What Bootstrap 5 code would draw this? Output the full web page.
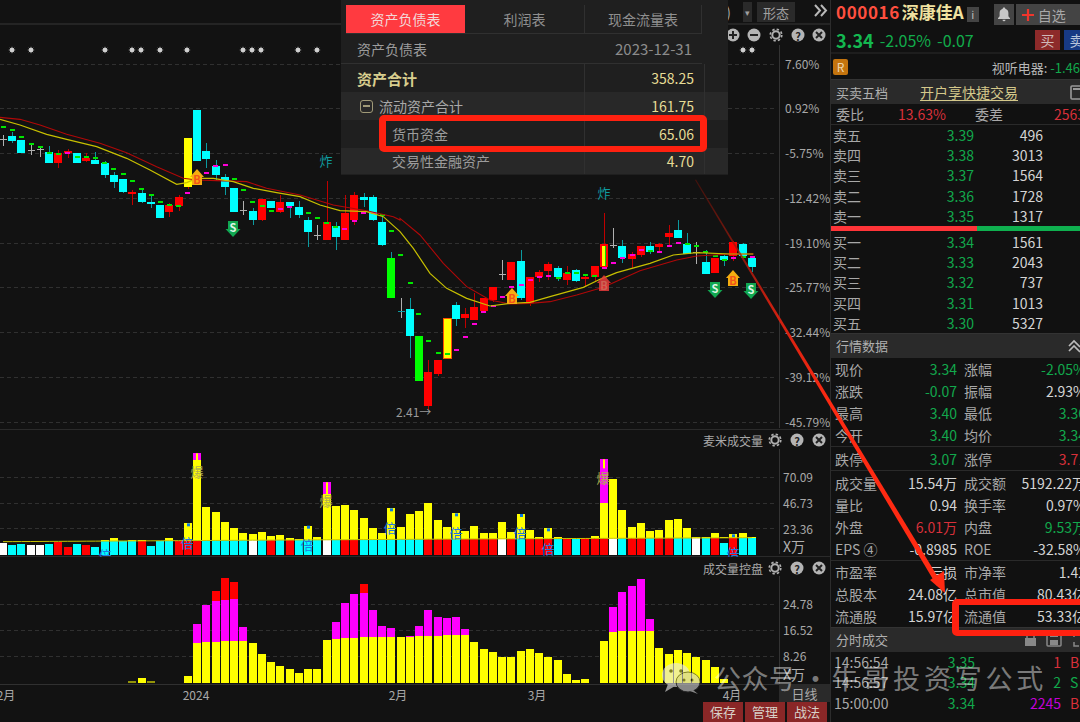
<!DOCTYPE html>
<html lang="zh-CN">
<head>
<meta charset="utf-8">
<title>行情</title>
<link href="https://cdn.jsdelivr.net/npm/bootstrap@5.3.0/dist/css/bootstrap.min.css" rel="stylesheet">
<style>
html,body{margin:0;height:722px;overflow:hidden;background:#121212;}
body{font-family:"Noto Sans CJK SC","Liberation Sans",sans-serif;font-size:14px;line-height:1;color:#a8a8a8;}
.stage{width:1080px;height:722px;overflow:hidden;}
.chart-col{width:830px;flex:none;}
.side-col{width:250px;flex:none;border-left:1px solid #2c2c2c;background:#111;overflow:hidden;}
svg text{font-family:"Noto Sans CJK SC","Liberation Sans",sans-serif;}
svg{display:block;}
.tool-bar{height:25px;border-bottom:2px solid #242424;padding-right:2px;}
.tool-cap{height:20px;background:#2a2a2a;color:#a0a0a0;font-size:13px;padding:0 6px;margin-top:2px;margin-left:5px;}
.tool-txt{color:#a0a0a0;font-size:15px;}
.foot-row{height:18px;}
.day-box{width:51px;height:18px;background:#2a2a2a;color:#aaa;font-size:13px;}
.act-row{height:20px;gap:2px;padding-right:3px;}
.act-btn{width:40px;height:20px;padding:0;border:0;border-radius:0;background:#8a2727;color:#d8d0c8;font-size:13px;line-height:20px;}
.pop{left:341px;top:0;width:387px;height:175px;background:#1f1f1f;padding:5px 0 0 5px;color:#9c9c9c;}
.pop-tabs{height:29px;width:356px;border-bottom:1px solid #303030;}
.pop-tab{width:120px;height:28px;font-size:14px;border-right:1px solid #303030;color:#8f8f8f;}
.pop-tab.on{width:119px;background:#ff3a40;color:#f2d8d8;border-right:0;}
.pop-row{height:28px;margin-left:-5px;padding-left:5px;}
.pop-row.alt{background:#282828;}
.pop-row.head{height:30px;border-bottom:1px solid #303030;}
.pop-name{width:239px;height:100%;padding-left:11px;border-right:1px solid #303030;flex:none;}
.pop-val{width:120px;height:100%;padding-right:10px;border-right:1px solid #303030;color:#e6dc96;font-size:14px;flex:none;}
.pop-name.sum{color:#d8ce8e;font-weight:700;font-size:15px;}
.pop-name.sub{padding-left:46px;}
.pop-name.grp{padding-left:33px;position:relative;color:#a8a8a8;}
.gb{width:13px;height:13px;border:1.5px solid #a09a78;border-radius:3px;margin-left:-19px;margin-right:6px;position:relative;flex:none;}
.gb::after{content:"";position:absolute;left:2px;right:2px;top:4px;height:2px;background:#a09a78;}
.hi-box{border:solid #ff2110;border-width:6px 7px;border-radius:5px;}
.hi-a{left:379px;top:115px;width:328px;height:37px;}
.hi-b{left:952px;top:599px;width:135px;height:37px;}
.s-top1{height:28px;padding:3px 0 0 5px;width:300px;}
.s-top1>*{flex:none;white-space:nowrap;}
.s-code{color:#ff4f3f;font-weight:700;font-size:17px;letter-spacing:.6px;}
.s-name{color:#f0e2a0;font-weight:700;font-size:17px;margin-left:2px;}
.s-i{width:12px;height:15px;background:#444;color:#bbb;font-size:11px;margin-left:3px;}
.s-bell{width:20px;height:21px;background:#444;margin-left:15px;margin-top:1px;}
.s-fav{width:80px;height:21px;background:#444;color:#a8a8a8;margin-left:2px;margin-top:1px;padding-left:6px;font-size:14px;}
.s-plus{margin-right:4px;}
.s-top2{height:26px;padding-left:5px;border-bottom:2px solid #1e1e1e;color:#12ab4b;width:258px;}
.s-px{font-size:18px;font-weight:700;color:#14b850;margin-right:6px;}
.s-chg{font-size:16px;margin-right:6px;}
.s-buy,.s-sell{width:25px;height:20px;font-size:14px;margin-left:4px;padding:0;border:0;border-radius:0;color:#d0b8b8;line-height:20px;flex:none;}
.s-buy{background:#8d2a2a;margin-left:auto;}
.s-sell{background:#173a85;color:#b8c4da;}
.s-sec{height:24px;padding:0 0 0 2px;font-size:13px;color:#b8b8b8;}
.s-r{width:15px;height:16px;border-radius:2px;background:#c4740e;color:#eed8b0;font-size:12px;}
.s-bar{height:25px;background:#2a2a2a;border-top:1px solid #333;padding:0 0 0 5px;color:#b0b0b0;font-size:13px;}
.s-link{color:#d4c88a;text-decoration:underline;text-underline-offset:2px;margin-left:32px;font-size:14px;}
.wb-row{height:21px;padding:0 0 0 5px;border-bottom:1px solid #2a2a2a;font-size:14px;}
.wb-row>span{flex:none;white-space:nowrap;}
.cell-red{color:#d8303a;}
.cell-green{color:#12a84c;}
.cell-w{color:#d4d4d4;}
.cell-pu{color:#c400d8;}
.book-row{height:20.2px;padding-left:2px;font-size:14px;}
.book-name{width:40px;flex:none;}
.book-px{width:101px;text-align:right;color:#12a84c;flex:none;}
.book-vol{width:69px;text-align:right;color:#d4d4d4;flex:none;}
.split{height:5px;}
.split i{display:block;height:5px;}
.q-set{border-bottom:1px solid #2a2a2a;}
.q-row{display:grid;grid-template-columns:122px 122px;column-gap:7px;padding-left:4px;height:22px;width:260px;align-items:center;font-size:14px;}
.q-cell{display:flex;justify-content:space-between;white-space:nowrap;}
.tr-row{height:20.4px;padding-left:3px;font-size:14px;}
.tr-t{width:54px;flex:none;}
.tr-p{width:87px;text-align:right;color:#12a84c;flex:none;}
.tr-v{width:86px;text-align:right;flex:none;}
.tr-s{margin-left:9px;flex:none;}
.mark-layer{left:0;top:0;pointer-events:none;}
.wm{left:714px;top:660px;color:rgba(255,255,255,.46);font-size:27px;line-height:36px;white-space:nowrap;}
.wm-a{letter-spacing:.5px;}
.wm-d{width:26px;text-align:center;margin-left:5.500px;margin-right:3.500px;}
.wm-b{letter-spacing:3.800px;}
</style>
</head>
<body>
<div class="stage d-flex position-relative">
  <div class="chart-col d-flex flex-column">
    <div class="tool-bar d-flex justify-content-end align-items-start">
      <span class="tool-txt me-2 mt-1">)</span>
      <span class="tool-cap d-flex align-items-center" style="padding:0 2px;font-size:9px;margin-left:4px">▾</span>
      <span class="tool-cap d-flex align-items-center">形态</span>
      <svg class="mt-1" style="margin-left:19px" width="14" height="13" viewBox="0 0 14 13"><path d="M1 1l5 5.500-5 5.500M7 1l5 5.500-5 5.500" fill="none" stroke="#b8b8b8" stroke-width="2"/></svg>
    </div>
    <svg id="p1" width="830" height="404" viewBox="0 25 830 404"></svg>
    <svg id="p2" width="830" height="128" viewBox="0 429 830 128"></svg>
    <svg id="p3" width="830" height="127" viewBox="0 557 830 127"></svg>
    <div class="d-flex foot-row">
      <svg id="p4" width="779" height="18" viewBox="0 684 779 18"></svg>
      <div class="day-box d-flex align-items-center justify-content-center">日线</div>
    </div>
    <div class="act-row d-flex justify-content-end">
      <button class="btn act-btn">保存</button>
      <button class="btn act-btn">管理</button>
      <button class="btn act-btn">战法</button>
    </div>
  </div>

  <div class="side-col">
    <div class="s-top1 d-flex align-items-start">
      <span class="s-code">000016</span><span class="s-name">深康佳A</span>
      <span class="s-i d-flex align-items-center justify-content-center mt-1">i</span>
      <span class="s-bell d-flex align-items-center justify-content-center">
        <svg width="14" height="15" viewBox="0 0 14 15"><path d="M7 0.5c-.8 0-1.300.5-1.300 1.200C3.600 2.300 2.600 4 2.600 6v3.200L1 11.300v.7h12v-.7l-1.600-2.100V6c0-2-1-3.700-3.100-4.300C8.300 1 7.800.5 7 .5zM5.500 12.800a1.500 1.500 0 0 0 3 0z" fill="#c8c8c8"/></svg>
      </span>
      <span class="s-fav d-flex align-items-center"><svg class="s-plus" width="12" height="12" viewBox="0 0 12 12"><path d="M6 0v12M0 6h12" stroke="#f0352c" stroke-width="2.200"/></svg>自选</span>
    </div>
    <div class="s-top2 d-flex align-items-center">
      <span class="s-px">3.34</span><span class="s-chg">-2.05%</span><span class="s-chg">-0.07</span>
      <button class="btn s-buy">买</button><button class="btn s-sell">卖</button>
    </div>
    <div class="s-sec d-flex align-items-center justify-content-between" style="margin-top:1px">
      <span class="s-r d-flex align-items-center justify-content-center">R</span>
      <span class="text-nowrap" style="margin-right:-12px">视听电器: <span class="cell-green">-1.46%</span></span>
    </div>
    <div class="s-bar d-flex align-items-center justify-content-between">
      <span>买卖五档<span class="s-link">开户享快捷交易</span></span>
      <svg width="10" height="15" viewBox="0 0 10 15"><rect x="1" y="1" width="12" height="13" fill="none" stroke="#999" stroke-width="1.600" rx="1"/><rect x="3" y="3" width="7" height="2" fill="#999"/></svg>
    </div>
    <div class="wb-row d-flex align-items-center">
      <span style="width:62px">委比</span><span class="cell-red" style="width:77px">13.63%</span><span style="width:79px">委差</span><span class="cell-red">2563</span>
    </div>
    <div id="sell"></div>
    <div class="split d-flex"><i style="width:147px;background:#ff3438"></i><i style="width:103px;background:#0fb04f"></i></div>
    <div id="buy" style="margin-top:1px"></div>
    <div class="s-bar d-flex align-items-center justify-content-between">
      <span>行情数据</span>
      <svg width="12" height="14" viewBox="0 0 12 14"><path d="M1 7l5-5 6 6M1 12l5-5 6 6" fill="none" stroke="#bbb" stroke-width="1.700"/></svg>
    </div>
    <div class="q-set" id="q1"></div>
    <div class="q-set" id="q2" style="padding-top:1px"></div>
    <div class="q-set" id="q3" style="padding-top:1px"></div>
    <div id="q4"></div>
    <div class="s-bar d-flex align-items-center justify-content-between" style="padding-right:0">
      <span>分时成交</span>
      <svg width="56" height="15" viewBox="0 0 56 15"><path d="M3 6V4a3.500 3.500 0 0 1 7 0v2" fill="none" stroke="#888" stroke-width="1.500"/><rect x="1" y="6" width="11" height="8" fill="#888"/><rect x="23" y="1" width="14" height="13" fill="none" stroke="#888" stroke-width="1.500" rx="1"/><rect x="26" y="8" width="8" height="5" fill="#888"/><rect x="26" y="2" width="8" height="3" fill="#888"/><path d="M55 1h-5v4M50 10v4h5" fill="none" stroke="#888" stroke-width="1.500"/></svg>
    </div>
    <div id="trades"></div>
  </div>

  <div class="pop position-absolute">
    <div class="pop-tabs d-flex">
      <div class="pop-tab on d-flex align-items-center justify-content-center">资产负债表</div>
      <div class="pop-tab d-flex align-items-center justify-content-center">利润表</div>
      <div class="pop-tab d-flex align-items-center justify-content-center" style="width:117px">现金流量表</div>
    </div>
    <div class="pop-row head d-flex" style="width:361px">
      <div class="d-flex align-items-center justify-content-between w-100" style="padding:0 10px 0 11px"><span>资产负债表</span><span style="font-size:15px;color:#8c8c8c">2023-12-31</span></div>
    </div>
    <div class="pop-row d-flex">
      <div class="pop-name sum d-flex align-items-center">资产合计</div>
      <div class="pop-val d-flex align-items-center justify-content-end">358.25</div>
    </div>
    <div class="pop-row alt d-flex">
      <div class="pop-name grp d-flex align-items-center"><span class="gb"></span>流动资产合计</div>
      <div class="pop-val d-flex align-items-center justify-content-end">161.75</div>
    </div>
    <div class="pop-row d-flex">
      <div class="pop-name sub d-flex align-items-center">货币资金</div>
      <div class="pop-val d-flex align-items-center justify-content-end">65.06</div>
    </div>
    <div class="pop-row alt d-flex" style="height:26px">
      <div class="pop-name sub d-flex align-items-center">交易性金融资产</div>
      <div class="pop-val d-flex align-items-center justify-content-end">4.70</div>
    </div>
  </div>

  <svg class="mark-layer position-absolute" width="1080" height="722" viewBox="0 0 1080 722">
    <defs><linearGradient id="ag" gradientUnits="userSpaceOnUse" x1="695" y1="180" x2="945" y2="593">
      <stop offset="0" stop-color="#6a1208" stop-opacity=".55"/><stop offset=".3" stop-color="#c81f10"/><stop offset=".55" stop-color="#ff2a12"/><stop offset="1" stop-color="#ff2a12"/>
    </linearGradient></defs>
    <polygon points="695,180 696,179.500 941.500,583 937,586" fill="url(#ag)"/>
    <polygon points="945,593 930,580 944,571" fill="#ff2a12"/>
    <g opacity=".62">
      <ellipse cx="676" cy="675" rx="14" ry="12" fill="#e8e8e8"/><polygon points="668,684 665,692 675,686" fill="#e8e8e8"/>
      <circle cx="671" cy="671" r="1.800" fill="#333"/><circle cx="681" cy="671" r="1.800" fill="#333"/>
      <ellipse cx="688" cy="682" rx="12" ry="10" fill="#cfcfcf" stroke="#333" stroke-width="1"/><polygon points="693,690 698,694 690,691" fill="#cfcfcf"/>
      <circle cx="684" cy="680" r="1.500" fill="#333"/><circle cx="692" cy="680" r="1.500" fill="#333"/>
    </g>
  </svg>
  <div class="hi-box hi-a position-absolute"></div>
  <div class="hi-box hi-b position-absolute"></div>
  <div class="wm position-absolute d-flex"><span class="wm-a">公众号</span><span class="wm-d">·</span><span class="wm-b">牛哥投资写公式</span></div>
</div>

<script src="https://cdn.jsdelivr.net/npm/bootstrap@5.3.0/dist/js/bootstrap.bundle.min.js"></script>
<script>
var C={c:'#00ffff',r:'#ff0000',g:'#00ff00',y:'#ffff00',Y:'#ffff00',R:'#ff0000',d:'#bbbbbb',w:'#ffffff',m:'#ff00ff'};
var WK={c:'#0b9aa0',r:'#c00000',g:'#0b9aa0',y:'#c00000',Y:'#c00000',R:'#c00000',d:'#b0b0b0'};
function X(n){return 3+n*9.245;}
function el(id,html){document.getElementById(id).innerHTML=html;}
function dash(ys,x2){return ys.map(function(y){return '<line x1="0" x2="'+x2+'" y1="'+(y+.5)+'" y2="'+(y+.5)+'" stroke="#303030" stroke-dasharray="4 3"/>';}).join('');}
function label(x,y,t,fill,size,anchor,extra){return '<text x="'+x+'" y="'+y+'" fill="'+(fill||'#aaa')+'" font-size="'+(size||12)+'" dominant-baseline="central"'+(anchor?' text-anchor="'+anchor+'"':'')+(extra||'')+'>'+t+'</text>';}
function ctrl(x,y,k){
  var s='<circle cx="'+x+'" cy="'+y+'" r="6.500" fill="#b4b4b4"/>';
  if(k=='+')s+='<path d="M'+(x-4)+' '+y+'h8M'+x+' '+(y-4)+'v8" stroke="#222" stroke-width="2"/>';
  if(k=='-')s+='<path d="M'+(x-4)+' '+y+'h8" stroke="#222" stroke-width="2"/>';
  if(k=='x')s+='<path d="M'+(x-3)+' '+(y-3)+'l6 6M'+(x+3)+' '+(y-3)+'l-6 6" stroke="#222" stroke-width="2"/>';
  if(k=='?')s+='<text x="'+x+'" y="'+(y+.5)+'" fill="#222" font-size="11" font-weight="700" text-anchor="middle" dominant-baseline="central">?</text>';
  if(k=='g')s='<circle cx="'+x+'" cy="'+y+'" r="5.800" fill="none" stroke="#b0b0b0" stroke-width="1.600" stroke-dasharray="2.400 2.150"/><circle cx="'+x+'" cy="'+y+'" r="3.700" fill="none" stroke="#b0b0b0" stroke-width="2"/>';
  return s;
}
function star(x,y){return '<g stroke="#c8c8c8" stroke-width=".8"><path d="M'+(x-3.200)+' '+y+'h6.400M'+x+' '+(y-3.200)+'v6.400M'+(x-2.200)+' '+(y-2.200)+'l4.400 4.400M'+(x+2.200)+' '+(y-2.200)+'l-4.400 4.400"/></g><circle cx="'+x+'" cy="'+y+'" r="2.200" fill="#d0d0d0"/>';}
function headIcons(y){return ctrl(775,y,'g')+ctrl(797,y,'?')+ctrl(819,y,'x');}

var K=[[0,139,141,135,146,'d'],[1,136,141,132,143,'c'],[2,140,153,140,153,'c'],[3,150,151,144,155,'d'],[4,149,150,146,157,'d'],[5,152,163,146,163,'c'],[6,153,163,150,168,'r'],[7,151,153,149,158,'r'],[8,153,163,153,163,'c'],[9,158,161,153,162,'r'],[10,160,164,152,164,'c'],[11,163,175,161,178,'c'],[12,175,182,172,188,'c'],[13,179,192,179,193,'c'],[14,192,194,190,205,'r'],[15,193,202,190,203,'c'],[16,202,204,195,208,'c'],[17,205,218,205,218,'c'],[18,205,212,203,217,'r'],[19,197,206,195,211,'r'],[20,138,187,138,189,'Y'],[21,110,161,110,161,'c'],[22,151,159,143,168,'c'],[23,166,175,160,180,'c'],[24,177,187,174,195,'c'],[25,188,212,188,212,'c'],[26,210,211,201,215,'d'],[27,211,220,208,225,'c'],[28,199,220,199,221,'r'],[29,201,208,201,208,'c'],[30,202,212,195,213,'r'],[31,202,206,202,218,'c'],[32,207,215,201,218,'c'],[33,220,232,217,247,'c'],[34,235,236,225,240,'d'],[35,222,240,181,240,'r'],[36,226,237,222,250,'c'],[37,213,240,195,240,'r'],[38,195,220,192,225,'r'],[39,197,200,193,207,'c'],[40,197,220,195,221,'c'],[41,222,245,216,246,'c'],[42,258,298,252,298,'g'],[43,311,312,298,318,'d'],[44,309,336,298,358,'c'],[45,336,381,336,381,'g'],[46,372,406,360,410,'r'],[47,360,374,360,376,'r'],[48,318,358,318,358,'y'],[49,305,319,302,326,'c'],[50,314,318,308,328,'r'],[51,307,320,293,320,'r'],[52,298,311,298,312,'r'],[53,287,300,287,302,'r'],[54,274,275,260,280,'d'],[55,262,280,262,280,'r'],[56,261,298,250,300,'c'],[57,277,303,277,306,'r'],[58,272,277,270,282,'r'],[59,264,271,262,280,'r'],[60,268,277,266,281,'c'],[61,273,280,266,285,'r'],[62,270,281,269,282,'c'],[63,277,279,275,287,'r'],[64,266,277,266,281,'r'],[65,244,267,213,268,'R'],[66,245,246,228,248,'d'],[67,246,258,240,263,'c'],[68,254,259,252,268,'r'],[69,246,255,246,257,'r'],[70,246,252,242,254,'c'],[71,244,247,243,251,'r'],[72,233,237,225,246,'r'],[73,230,238,220,238,'c'],[74,244,254,233,254,'c'],[75,252,253,242,264,'d'],[76,262,274,250,274,'c'],[77,258,273,258,273,'r'],[78,256,260,255,266,'c'],[79,242,256,241,261,'r'],[80,244,256,243,258,'c'],[81,258,267,258,272,'c']];
var TG=[[3,126],[12,129],[21,136],[31,143],[40,146],[49,152],[58,153],[77,156],[86,156],[95,157],[104,162],[113,168],[123,173],[132,180],[141,188],[151,194],[160,201],[169,204],[178,205],[234,178],[243,189],[252,201],[262,205],[271,210],[308,212],[317,217],[326,222],[335,226],[382,214],[391,230],[400,254],[410,282],[418,313],[428,340],[438,352],[447,353],[558,277],[567,272],[576,272],[585,274],[594,275],[650,250],[687,243],[696,245],[705,251],[715,255],[724,259],[743,256]];
var TM=[[67,152],[187,192],[206,172],[215,165],[225,164],[280,208],[289,206],[344,228],[354,220],[363,212],[373,212],[456,349],[465,336],[474,323],[483,311],[493,305],[502,296],[511,286],[521,284],[530,279],[539,276],[548,275],[604,267],[613,262],[622,257],[632,254],[641,249],[659,251],[669,245],[678,242],[733,257],[752,256]];

function pts1(a){return a.map(function(p){return (p[0]/3)+','+(p[1]/3);}).join(' ');}
function pts7(a){return a.map(function(p){return (p[0]/3+400)+','+(p[1]/3+180);}).join(' ');}
var red1=[[0,352],[60,358],[120,375],[200,403],[300,430],[380,458],[470,500],[550,535],[590,540],[650,542],[740,545],[800,565],[900,585],[1000,615],[1100,632],[1180,650],[1200,660]];
var red7=[[0,115],[60,165],[130,250],[200,320],[270,360],[330,372],[390,370],[450,365],[530,345],[610,322],[720,272],[830,240],[890,228],[990,222],[1060,222]];
var yel1=[[0,358],[60,375],[140,403],[200,418],[290,440],[380,475],[450,510],[530,553],[560,548],[590,535],[640,535],[700,545],[760,565],[830,578],[900,590],[960,615],[1020,632],[1100,635],[1150,650]];
var yel7=[[0,155],[40,205],[90,280],[140,325],[200,355],[270,378],[330,370],[390,367],[450,350],[550,322],[600,298],[650,278],[750,250],[820,225],[890,218],[990,222],[1060,222]];

function house(x,y,f,t){f=f||'#f5ad10';t=t||'#f4541a';return '<polygon points="'+x+','+(y-9)+' '+(x+7)+','+(y-1)+' '+(x+5)+','+(y-1)+' '+(x+5)+','+(y+7)+' '+(x-5)+','+(y+7)+' '+(x-5)+','+(y-1)+' '+(x-7)+','+(y-1)+'" fill="'+f+'"/><text x="'+x+'" y="'+(y+1)+'" fill="'+t+'" font-size="11" font-weight="700" text-anchor="middle" dominant-baseline="central">B</text>';}
function down(x,y){return '<polygon points="'+x+','+(y+9)+' '+(x+7.500)+','+(y+1)+' '+(x+5)+','+(y+1)+' '+(x+5)+','+(y-7)+' '+(x-5)+','+(y-7)+' '+(x-5)+','+(y+1)+' '+(x-7.500)+','+(y+1)+'" fill="#11a750"/><text x="'+x+'" y="'+(y-1)+'" fill="#dff5e6" font-size="11" font-weight="700" text-anchor="middle" dominant-baseline="central">S</text>';}

(function(){
  var s='';
  s+='<line x1="779.500" x2="779.500" y1="45" y2="428" stroke="#333"/>';
  s+=dash([64,108,153,198,243,287,332,377,422],775);
  var ax=[[64,'7.60%'],[108,'0.92%'],[153,'-5.75%'],[198,'-12.42%'],[243,'-19.10%'],[287,'-25.77%'],[332,'-32.44%'],[377,'-39.12%'],[422,'-45.79%']];
  ax.forEach(function(a){s+=label(785,a[0]-1,a[1],'#a8a8a8',12);});
  [12,31,105,132,141,160,187,243,252,261,298,317,743,752].forEach(function(x){s+=star(x,50);});
  K.forEach(function(k){
    var x=Math.round(X(k[0])),col=C[k[5]],w=WK[k[5]];
    s+='<rect x="'+x+'" y="'+k[3]+'" width="1" height="'+(k[4]-k[3])+'" fill="'+w+'" shape-rendering="crispEdges"/>';
    if(k[5]=='d'){s+='<rect x="'+(x-3)+'" y="'+k[1]+'" width="7" height="1" fill="'+(k[0]==43?'#0b9aa0':w)+'" shape-rendering="crispEdges"/>';return;}
    s+='<rect x="'+(x-4)+'" y="'+k[1]+'" width="8" height="'+(k[2]-k[1])+'" fill="'+col+'" shape-rendering="crispEdges"'+(k[5]=='y'?' stroke="#ff5000" stroke-width="1"':'')+'/>';
  });
  s+='<rect x="602" y="246" width="3" height="20" fill="#ffff00" shape-rendering="crispEdges"/><rect x="605" y="246" width="1" height="20" fill="#00e000" shape-rendering="crispEdges"/>';
  TG.forEach(function(t){s+='<rect x="'+(t[0]-2.500)+'" y="'+t[1]+'" width="5" height="2" fill="#00e600" shape-rendering="crispEdges"/>';});
  TM.forEach(function(t){s+='<rect x="'+(t[0]-2.500)+'" y="'+t[1]+'" width="5" height="2" fill="#ff00d8" shape-rendering="crispEdges"/>';});
  s+='<polyline points="'+pts1(red1)+' '+pts7(red7)+'" fill="none" stroke="#b00808" stroke-width="1.100"/>';
  s+='<polyline points="'+pts1(yel1)+' '+pts7(yel7)+'" fill="none" stroke="#c8c000" stroke-width="1.200"/>';
  s+=house(197,178)+house(512,297)+house(733,279);
  s+='<g opacity=".85">'+house(604,284,'#e83a3a','#f07060')+'</g>';
  s+=down(233,228)+down(715,289)+down(751,290);
  s+=label(326,160,'炸','#0f9ca0',13,'middle')+label(604,192,'炸','#0f9ca0',13,'middle');
  s+=label(396,411,'2.41→','#9a9a9a',12);
  s+=ctrl(733,35,'+')+ctrl(754,35,'-')+ctrl(776,35,'g')+ctrl(798,35,'?')+ctrl(819,35,'x');
  el('p1',s);

  var low='wccwwcrrcrcccccrcccrrrcccccwcrcrcccwcrrcccccc'.split('').concat('crrrcrrrrwrcrrrcrcrrrwcrrcrrccwcrcrcc'.split(''));
  var vt={11:345,12:338,13:347,14:344,15:346,18:338,20:295,21:85,22:246,23:262,24:292,25:310,26:323,27:326,28:322,29:334,30:331,31:339,32:343,33:302,34:336,35:172,36:243,37:240,38:254,39:278,40:310,41:323,42:250,43:306,44:267,45:257,46:235,47:286,48:307,49:265,50:318,51:302,52:323,53:323,54:292,55:320,56:267,57:315,58:336,59:310,60:336,64:333,65:103,66:162,67:255,68:307,69:294,70:318,71:315,72:286,73:283,74:310,75:335,76:335,77:325,78:335,79:328,80:325,81:335};
  var lowT={0:355,1:360,2:357,3:360,4:360,5:357,6:352,7:365,8:357,9:360,10:365,16:362};
  var v='';
  v+='<rect x="0" y="429" width="830" height="1" fill="#2a2a2a"/><rect x="0" y="556" width="830" height="1.500" fill="#2a2a2a"/>';
  v+='<line x1="779.500" x2="779.500" y1="449" y2="554" stroke="#333"/>';
  v+=dash([477,503,528],775);
  [[477,'70.09'],[503,'46.73'],[529,'23.36']].forEach(function(a){v+=label(783,a[0]-1,a[1],'#a8a8a8',12);});
  v+=label(783,546,'X万','#b0b0b0',14);
  v+=label(763,440,'麦米成交量','#a8a8a8',12,'end')+headIcons(440);
  function y2(z){return 425+z/3;}
  var base=function(n){return n<50?350-(n/50)*8:342-(n-50)/32*4;};
  for(var n=0;n<=81;n++){
    var x=Math.round(X(n))-4,c=C[low[n]||'c'];
    if(vt[n]){
      var top=y2(vt[n]);
      if(n==21||n==35||n==65){
        var m=n==21?105:(n==35?208:233);
        v+='<rect x="'+x+'" y="'+top+'" width="8" height="'+(y2(m)-top)+'" fill="#ff00ff" shape-rendering="crispEdges"/>';
        if(n!=65){v+='<rect x="'+(x+3)+'" y="'+top+'" width="2" height="'+(y2(m)-top)+'" fill="#ffff00"/>';}
        else{v+='<rect x="'+(x+3)+'" y="'+top+'" width="2" height="9" fill="#ffff00"/>';}
        top=y2(m);
      }
      v+='<rect x="'+x+'" y="'+top+'" width="8" height="'+(y2(base(n))-top)+'" fill="#ffff00" shape-rendering="crispEdges"/>';
    }
    var lt=lowT[n]||(n==78?355:(n==61||n==62?342:base(n)));
    v+='<rect x="'+x+'" y="'+y2(lt)+'" width="8" height="'+(y2(389)-y2(lt))+'" fill="'+c+'" shape-rendering="crispEdges"/>';
    if([20,33,42,49,56,59,79].indexOf(n)>=0){v+='<rect x="'+(x+3)+'" y="'+y2(vt[n])+'" width="3" height="3" fill="#0b7be0"/>';}
  }
  var lp=[];for(var i=0;i<=81;i++){lp.push(X(i)+','+y2(base(i)));}
  v+='<polyline points="'+lp.join(' ')+'" fill="none" stroke="#c8c400" stroke-width="1"/>';
  [[187,542],[307,544],[390,527],[105,554],[456,532],[520,532],[548,548],[733,552]].forEach(function(p){v+=label(p[0],p[1],'倍','#1f78e0',13,'middle');});
  [[197,471],[326,500],[603,477]].forEach(function(p){v+=label(p[0],p[1],'爆','#b0b050',13,'middle');});
  el('p2',v);

  var ct={14:[364],15:[354],16:[364],20:[349],21:[248,192],22:[245,134],23:[245,123,92],24:[243,121,55],25:[243,118,66],26:[243,201],27:[248],28:[283],29:[307],30:[317],31:[328],32:[339],33:[328],34:[328],35:[240],36:[238,187],37:[234,129],38:[234,103],39:[232,100,73],40:[232,150],41:[232,198],42:[230,203],43:[232],44:[230,228],45:[227,198],46:[227,150],47:[227,171],48:[224,174],49:[224,171],50:[224,208],51:[245],52:[267],53:[277],54:[292],55:[292],56:[274],57:[268],58:[280],59:[290],60:[300],61:[343],62:[359],63:[356],65:[243],66:[216,142],67:[214,95],68:[214,79],69:[214,56],70:[212,177],71:[264],72:[282],73:[271],74:[280],75:[290],76:[300],77:[322],78:[358]};
  function y3(z){return 560+z/3;}
  var w='';
  w+='<line x1="779.500" x2="779.500" y1="576" y2="684" stroke="#333"/>';
  w+=dash([604,630,656],775);
  [[604,'24.78'],[630,'16.52'],[656,'8.26']].forEach(function(a){w+=label(783,a[0]-1,a[1],'#a8a8a8',12);});
  w+=label(783,674,'X万','#b0b0b0',14);
  w+=label(763,568,'成交量控盘','#a8a8a8',12,'end')+headIcons(568);
  Object.keys(ct).forEach(function(k){
    var a=ct[k],x=Math.round(X(+k))-4,dim=(k==14||k==16)?' opacity=".55"':'';
    w+='<rect x="'+x+'" y="'+y3(a[0])+'" width="8" height="'+(y3(368)-y3(a[0]))+'" fill="#ffff00" shape-rendering="crispEdges"'+dim+'/>';
    if(a[1])w+='<rect x="'+x+'" y="'+y3(a[1])+'" width="8" height="'+(y3(a[0])-y3(a[1]))+'" fill="#ff00ff" shape-rendering="crispEdges"/>';
    if(a[2])w+='<rect x="'+x+'" y="'+y3(a[2])+'" width="8" height="'+(y3(a[1])-y3(a[2]))+'" fill="#ff0000" shape-rendering="crispEdges"/>';
  });
  el('p3',w);
  var d='<rect x="0" y="684" width="779" height="1" fill="#303030"/>';
  [[6,'2月'],[196,'2024'],[398,'2月'],[537,'3月'],[732,'4月']].forEach(function(a){d+=label(a[0],694,a[1],'#a8a8a8',12,'middle');});
  el('p4',d);

  function book(names,px,vol){return names.map(function(t,i){return '<div class="book-row d-flex align-items-center"><span class="book-name">'+t+'</span><span class="book-px">'+px[i]+'</span><span class="book-vol">'+vol[i]+'</span></div>';}).join('');}
  el('sell',book(['卖五','卖四','卖三','卖二','卖一'],['3.39','3.38','3.37','3.36','3.35'],[496,3013,1564,1728,1317]));
  el('buy',book(['买一','买二','买三','买四','买五'],['3.34','3.33','3.32','3.31','3.30'],[1561,2043,737,1013,5327]));

  function qrows(rows){return rows.map(function(r){return '<div class="q-row"><div class="q-cell"><span>'+r[0]+'</span><span class="'+r[2]+'">'+r[1]+'</span></div><div class="q-cell"><span>'+r[3]+'</span><span class="'+r[5]+'">'+r[4]+'</span></div></div>';}).join('');}
  var G='cell-green',R='cell-red',W='cell-w';
  el('q1',qrows([['现价','3.34',G,'涨幅','-2.05%',G],['涨跌','-0.07',G,'振幅','2.93%',W],['最高','3.40',G,'最低','3.36',G],['今开','3.40',G,'均价','3.34',G]]));
  el('q2',qrows([['跌停','3.07',G,'涨停','3.71',R]]));
  el('q3',qrows([['成交量','15.54万',W,'成交额','5192.22万',W],['量比','0.94',W,'换手率','0.97%',W],['外盘','6.01万',R,'内盘','9.53万',G],['EPS ④','-0.8985',W,'ROE','-32.58%',W]]));
  el('q4',qrows([['市盈率','亏损',W,'市净率','1.42',W],['总股本','24.08亿',W,'总市值','80.43亿',W],['流通股','15.97亿',W,'流通值','53.33亿',W]]));

  el('trades',[['14:56:54','3.35','1',R,'B',R],['14:56:57','3.34','2',G,'S',G],['15:00:00','3.34','2245','cell-pu','B',R]].map(function(t){return '<div class="tr-row d-flex align-items-center"><span class="tr-t">'+t[0]+'</span><span class="tr-p">'+t[1]+'</span><span class="tr-v '+t[3]+'">'+t[2]+'</span><span class="tr-s '+t[5]+'">'+t[4]+'</span></div>';}).join(''));
})();
</script>
</body>
</html>
